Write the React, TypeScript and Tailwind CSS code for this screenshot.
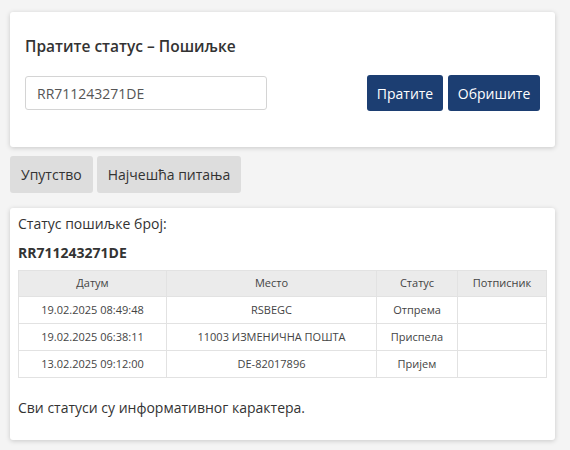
const rows = [
  { date: "19.02.2025 08:49:48", place: "RSBEGC", status: "Отпрема", signer: "" },
  { date: "19.02.2025 06:38:11", place: "11003 ИЗМЕНИЧНА ПОШТА", status: "Приспела", signer: "" },
  { date: "13.02.2025 09:12:00", place: "DE-82017896", status: "Пријем", signer: "" },
];

export default function App() {
  return (
    <div
      className="min-h-[450px] w-[570px] bg-[#f4f4f4] pl-[10px] pr-[15px] pt-[12px] text-[#333]"
      style={{ fontFamily: '"Open Sans", "Noto Sans", sans-serif' }}
    >
      <div className="rounded-[3px] bg-white px-[15px] pt-[24px] pb-[36px] shadow-[0_1px_5px_rgba(0,0,0,0.18)]">
        <h1 className="text-[15.5px] leading-[21px] font-semibold text-[#333]">
          Пратите статус – Пошиљке
        </h1>
        <div className="mt-[18px] flex items-center justify-between">
          <input
            readOnly
            value="RR711243271DE"
            className="h-[34px] w-[242px] rounded-[3px] border border-[#d4d4d4] px-[11px] text-[14px] text-[#555] outline-none"
          />
          <div className="flex gap-[5px]">
            <button className="h-[36px] w-[76px] rounded-[3px] bg-[#1c3e72] text-[14px] text-white">
              Пратите
            </button>
            <button className="h-[36px] w-[92px] rounded-[3px] bg-[#1c3e72] text-[14px] text-white">
              Обришите
            </button>
          </div>
        </div>
      </div>

      <div className="mt-[9px] flex gap-[4px]">
        <button className="h-[37px] rounded-[3px] bg-[#dddddd] px-[11px] text-[14px] text-[#333]">
          Упутство
        </button>
        <button className="h-[37px] rounded-[3px] bg-[#dddddd] px-[11px] text-[14px] text-[#333]">
          Најчешћа питања
        </button>
      </div>

      <div className="mt-[15px] rounded-[3px] bg-white px-[8px] pt-[6px] pb-[22px] shadow-[0_1px_5px_rgba(0,0,0,0.18)]">
        <p className="text-[14px] leading-[20px]">Статус пошиљке број:</p>
        <p className="mt-[9px] text-[14px] leading-[20px] font-bold">RR711243271DE</p>
        <table className="mt-[7px] w-[529px] border-collapse text-[11px] text-[#444]">
          <thead>
            <tr className="h-[26px] bg-[#ebebeb]">
              <th className="w-[148px] border border-[#e2e2e2] font-normal">Датум</th>
              <th className="w-[210px] border border-[#e2e2e2] font-normal">Место</th>
              <th className="w-[81px] border border-[#e2e2e2] font-normal">Статус</th>
              <th className="border border-[#e2e2e2] font-normal">Потписник</th>
            </tr>
          </thead>
          <tbody>
            {rows.map((r) => (
              <tr key={r.date} className="h-[27px]">
                <td className="border border-[#e2e2e2] text-center">{r.date}</td>
                <td className="border border-[#e2e2e2] text-center">{r.place}</td>
                <td className="border border-[#e2e2e2] text-center">{r.status}</td>
                <td className="border border-[#e2e2e2] text-center">{r.signer}</td>
              </tr>
            ))}
          </tbody>
        </table>
        <p className="mt-[20px] text-[14px] leading-[20px]">Сви статуси су информативног карактера.</p>
      </div>
    </div>
  );
}
